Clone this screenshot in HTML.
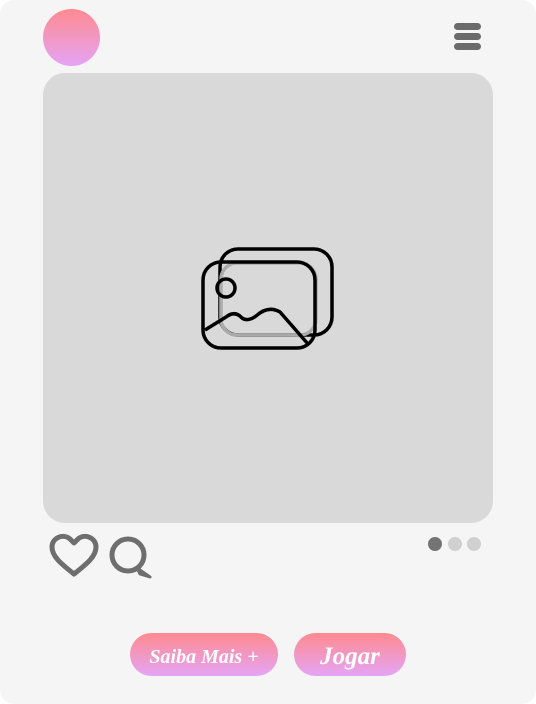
<!DOCTYPE html>
<html><head><style>
body{margin:0;width:536px;height:704px;background:#fff;position:relative;overflow:hidden;font-family:"Liberation Serif",serif}
.card{position:absolute;left:0;top:0;width:536px;height:704px;background:#f5f5f5;border-radius:14px}
.av{position:absolute;left:43px;top:9px;width:57px;height:57px;border-radius:50%;background:linear-gradient(#ff8a8f,#e4a4f6)}
.bar{position:absolute;left:454px;width:27px;height:7px;border-radius:4px;background:#6b6b6b}
.img{position:absolute;left:43px;top:73px;width:450px;height:450px;border-radius:22px;background:#d9d9d9}
.dot{position:absolute;top:537px;width:14px;height:14px;border-radius:50%;background:#d0d0d0}
.btn{position:absolute;top:633px;height:43px;border-radius:22px;background:linear-gradient(#ff8a8f,#e4a4f6);color:#fff;font-style:italic;font-weight:bold;text-align:center;line-height:48px}
</style></head><body>
<div class="card"></div>
<div class="av"></div>
<div class="bar" style="top:23px"></div><div class="bar" style="top:33px"></div><div class="bar" style="top:43px"></div>
<div class="img"></div>
<svg style="position:absolute;left:0;top:0" width="536" height="704">
<rect x="220" y="249" width="112" height="86" rx="18" fill="none" stroke="#000" stroke-width="3.5"/>
<rect x="221" y="263" width="95" height="72" rx="16" fill="none" stroke="#aaa" stroke-width="3.5"/>
<rect x="203" y="262" width="112" height="86" rx="18" fill="none" stroke="#000" stroke-width="3.5"/>
<circle cx="226" cy="288" r="9" fill="none" stroke="#000" stroke-width="3.5"/>
<path d="M205 330 L226 317 Q235 310 242 318 Q248 322 256 316 Q268 305 280 312 L308 344" fill="none" stroke="#000" stroke-width="3.5" stroke-linejoin="round"/>
<path d="M74 574 C60 563 52 556 52 547 C52 538 63 533 70 539 L74 543 L78 539 C85 533 96 538 96 547 C96 556 88 563 74 574 Z" fill="none" stroke="#6e6e6e" stroke-width="5" stroke-linejoin="round"/>
<circle cx="128" cy="555" r="16" fill="none" stroke="#6e6e6e" stroke-width="5"/>
<path d="M137 568 L150 577 L140 574 Z" fill="#6e6e6e" stroke="#6e6e6e" stroke-width="3" stroke-linejoin="round"/>
</svg>
<div class="dot" style="left:428px;background:#747474"></div>
<div class="dot" style="left:448px"></div>
<div class="dot" style="left:467px"></div>
<div class="btn" style="left:130px;width:148px;font-size:20px">Saiba Mais +</div>
<div class="btn" style="left:294px;width:112px;font-size:25px">Jogar</div>
</body></html>
